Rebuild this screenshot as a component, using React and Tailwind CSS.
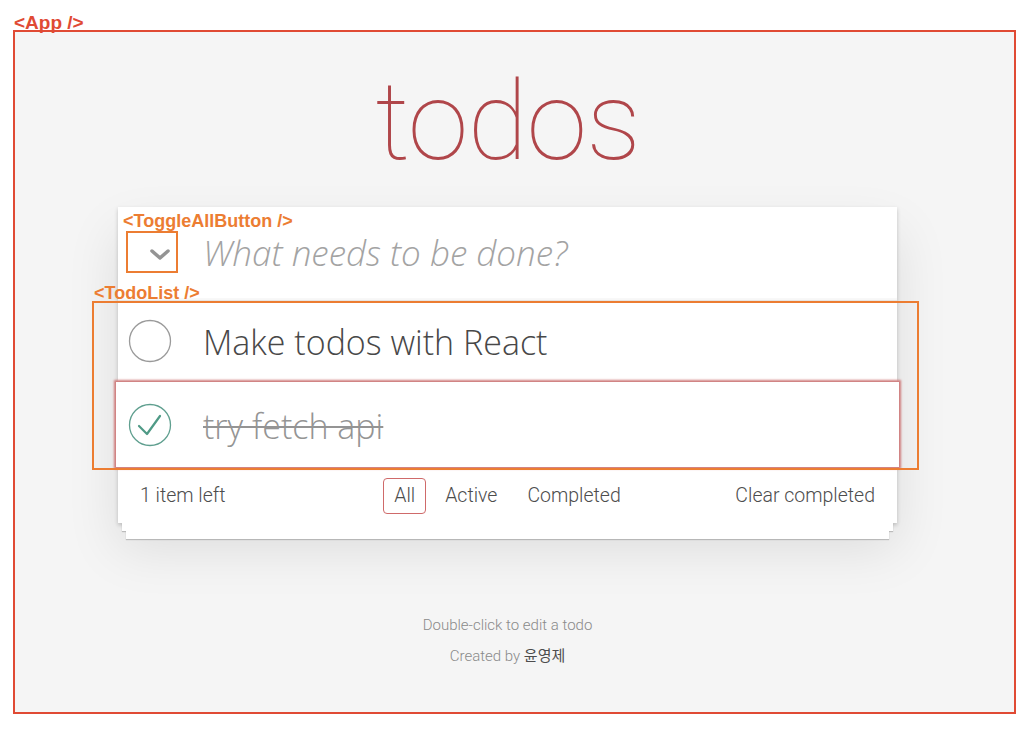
import React from "react";

const FONT = { fontFamily: '"Roboto", "Helvetica Neue", "Noto Sans CJK KR", sans-serif' };
const BIG = { fontFamily: '"Open Sans", "Roboto", sans-serif' };
const LABEL = { fontFamily: '"Liberation Sans", Arial, sans-serif' };

function Chevron() {
  return (
    <svg width="20" height="12" viewBox="0 0 20 12">
      <path d="M2 2 L10 9 L18 2" fill="none" stroke="#949494" strokeWidth="3.5" strokeLinecap="round" strokeLinejoin="round" />
    </svg>
  );
}

function CheckCircle({ done }) {
  return (
    <svg width="44" height="44" viewBox="0 0 44 44">
      <circle cx="22" cy="22" r="20.5" fill="none" stroke={done ? "#5f9f8f" : "#9a9a9a"} strokeWidth="1.3" />
      {done && <path d="M11 23 L19 31 L32 13" fill="none" stroke="#4f9a86" strokeWidth="2.2" strokeLinecap="round" strokeLinejoin="round" />}
    </svg>
  );
}

function TodoItem({ text, done, focused }) {
  return (
    <li
      className={
        "flex items-center bg-white " +
        (focused ? "h-[85px] -mx-[2px] px-[2px] shadow-[0_0_2px_2px_#cf7d7d] relative z-10" : "h-[81px] border-b border-[#ededed]")
      }
    >
      <div className="w-[85px] flex items-center pl-[10px]">
        <CheckCircle done={done} />
      </div>
      <span
        style={BIG}
        className={
          "text-[34px] font-light pt-[3px] " +
          (done ? "text-[#949494] line-through decoration-[2px]" : "text-[#484848]")
        }
      >
        {text}
      </span>
    </li>
  );
}

export default function App() {
  return (
    <div className="relative w-[1024px] h-[730px] bg-white" style={FONT}>
      {/* App frame */}
      <div className="absolute left-[13px] top-[30px] w-[1003px] h-[684px] border-2 border-[#e04a34] bg-[#f5f5f5]">
        <div className="flex flex-col items-center pr-[14px]">
          <h1 className="mt-[35px] h-[110px] leading-[110px] text-[110px] font-thin text-[#b0464a] tracking-[-1px]">
            todos
          </h1>

          <section className="mt-[30px] w-[779px] bg-white shadow-[0_2px_4px_rgba(0,0,0,0.2),0_25px_50px_rgba(0,0,0,0.1)]">
            <header className="h-[94px] flex items-center border-b border-[#e6e6e6] shadow-[inset_0_-2px_1px_rgba(0,0,0,0.03)]">
              <div className="w-[85px] flex justify-center pr-[2px] pt-[2px]">
                <Chevron />
              </div>
              <span style={BIG} className="text-[35px] italic font-light text-[#a3a3a3]">What needs to be done?</span>
            </header>

            <ul>
              <TodoItem text="Make todos with React" />
              <TodoItem text="try fetch api" done focused />
            </ul>

            <footer className="h-[56px] grid grid-cols-[1fr_auto_1fr] items-center px-[22px] text-[19.5px] font-light text-[#4d4d4d] border-t border-[#e6e6e6]">
              <span>1 item left</span>
              <div className="flex items-center gap-[8px]">
                <span className="px-[10px] h-[36px] leading-[34px] border border-[#cf6a6a] rounded-[4px]">All</span>
                <span className="px-[10px] h-[36px] leading-[34px] border border-transparent">Active</span>
                <span className="px-[10px] h-[36px] leading-[34px] border border-transparent">Completed</span>
              </div>
              <span className="text-right">Clear completed</span>
            </footer>
          </section>
          <div className="w-[771px] h-[8px] bg-white shadow-[0_1px_1px_rgba(0,0,0,0.2)]" />
          <div className="w-[763px] h-[8px] bg-white shadow-[0_1px_1px_rgba(0,0,0,0.2)]" />

          <div className="mt-[71px] text-[15px] font-light text-[#8a8a8a] leading-[31px] text-center">
            <p>Double-click to edit a todo</p>
            <p>
              Created by <span className="text-[#4d4d4d] font-normal">윤영제</span>
            </p>
          </div>
        </div>
      </div>

      {/* annotation overlays */}
      <div className="absolute left-[14px] top-[9px] text-[19px] font-bold text-[#e04a34]" style={LABEL}>
        {"<App />"}
      </div>
      <div className="absolute left-[123px] top-[208px] text-[18px] font-bold text-[#ec7d32]" style={LABEL}>
        {"<ToggleAllButton />"}
      </div>
      <div className="absolute left-[126px] top-[231px] w-[52px] h-[42px] border-2 border-[#ec7d32]" />
      <div className="absolute left-[94px] top-[280px] text-[18px] font-bold text-[#ec7d32]" style={LABEL}>
        {"<TodoList />"}
      </div>
      <div className="absolute left-[92px] top-[301px] w-[827px] h-[169px] border-2 border-[#ec7d32] z-20" />
    </div>
  );
}
